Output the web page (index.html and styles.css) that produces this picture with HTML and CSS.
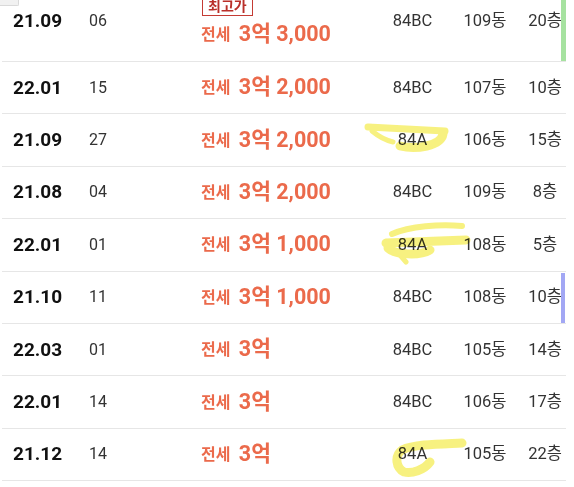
FILE: index.html
```html
<!DOCTYPE html>
<html lang="ko">
<head>
<meta charset="utf-8">
<link rel="stylesheet" href="styles.css">
</head>
<body>
<div class="page">
  <div class="tab-stub"></div>
  <div class="table">
    <div class="row first">
      <div class="c date">21.09</div>
      <div class="c day">06</div>
      <div class="c price">
        <span class="badge">최고가</span>
        <span class="amount"><span class="kind">전세</span> 3억 3,000</span>
      </div>
      <div class="c area">84BC</div>
      <div class="c dong">109동</div>
      <div class="c floor">20층</div>
      <span class="mark green"></span>
    </div>
    <div class="row">
      <div class="c date">22.01</div>
      <div class="c day">15</div>
      <div class="c price"><span class="amount"><span class="kind">전세</span> 3억 2,000</span></div>
      <div class="c area">84BC</div>
      <div class="c dong">107동</div>
      <div class="c floor">10층</div>
    </div>
    <div class="row">
      <div class="c date">21.09</div>
      <div class="c day">27</div>
      <div class="c price"><span class="amount"><span class="kind">전세</span> 3억 2,000</span></div>
      <div class="c area">84A</div>
      <div class="c dong">106동</div>
      <div class="c floor">15층</div>
    </div>
    <div class="row">
      <div class="c date">21.08</div>
      <div class="c day">04</div>
      <div class="c price"><span class="amount"><span class="kind">전세</span> 3억 2,000</span></div>
      <div class="c area">84BC</div>
      <div class="c dong">109동</div>
      <div class="c floor">8층</div>
    </div>
    <div class="row">
      <div class="c date">22.01</div>
      <div class="c day">01</div>
      <div class="c price"><span class="amount"><span class="kind">전세</span> 3억 1,000</span></div>
      <div class="c area">84A</div>
      <div class="c dong">108동</div>
      <div class="c floor">5층</div>
    </div>
    <div class="row">
      <div class="c date">21.10</div>
      <div class="c day">11</div>
      <div class="c price"><span class="amount"><span class="kind">전세</span> 3억 1,000</span></div>
      <div class="c area">84BC</div>
      <div class="c dong">108동</div>
      <div class="c floor">10층</div>
      <span class="mark blue"></span>
    </div>
    <div class="row">
      <div class="c date">22.03</div>
      <div class="c day">01</div>
      <div class="c price"><span class="amount"><span class="kind">전세</span> 3억</span></div>
      <div class="c area">84BC</div>
      <div class="c dong">105동</div>
      <div class="c floor">14층</div>
    </div>
    <div class="row">
      <div class="c date">22.01</div>
      <div class="c day">14</div>
      <div class="c price"><span class="amount"><span class="kind">전세</span> 3억</span></div>
      <div class="c area">84BC</div>
      <div class="c dong">106동</div>
      <div class="c floor">17층</div>
    </div>
    <div class="row">
      <div class="c date">21.12</div>
      <div class="c day">14</div>
      <div class="c price"><span class="amount"><span class="kind">전세</span> 3억</span></div>
      <div class="c area">84A</div>
      <div class="c dong">105동</div>
      <div class="c floor">22층</div>
    </div>
  </div>
  <svg class="marker" width="574" height="487" viewBox="0 0 574 487" aria-hidden="true">
    <g fill="none" stroke="#f6ef6a" stroke-linecap="round" stroke-linejoin="round">
      <path d="M368,127 L445,131" stroke-width="7"/>
      <path d="M443,134 C441,146 416,150 400,146" stroke-width="9"/>
      <path d="M372,131 C378,136 385,140 393,142" stroke-width="5"/>

      <path d="M392,234 C410,226 440,224 462,226" stroke-width="6"/>
      <path d="M386,243 L466,240" stroke-width="9"/>
      <path d="M388,248 C395,255 420,256 430,250" stroke-width="9"/>
      <path d="M400,255 L406,262" stroke-width="5"/>

      <path d="M462,443 C440,444 415,444 402,450 C394,456 396,468 404,472 C412,474 424,470 430,462" stroke-width="9"/>
    </g>
  </svg>
</div>
</body>
</html>
```

FILE: styles.css
```css
html, body {
  margin: 0;
  padding: 0;
  background: #ffffff;
}

.page {
  position: relative;
  width: 574px;
  height: 487px;
  overflow: hidden;
  font-family: Roboto, "Noto Sans CJK KR", "Noto Sans", sans-serif;
}

.tab-stub {
  position: absolute;
  top: 0;
  left: 0;
  width: 18px;
  height: 5px;
  background: #f1f1f1;
  border-right: 1px solid #d9d9d9;
  border-bottom: 1px solid #d9d9d9;
  border-bottom-right-radius: 2px;
}

.table {
  margin-left: 2px;
  width: 564px;
}

.row {
  position: relative;
  display: flex;
  align-items: center;
  height: 52.4px;
  box-sizing: border-box;
  border-bottom: 1px solid #e6e6e6;
}

.row.first {
  height: 62px;
  align-items: flex-start;
}

.c {
  line-height: 24px;
  white-space: nowrap;
}

.row.first .c {
  padding-top: 9px;
}

.date {
  width: 87px;
  padding-left: 11px;
  box-sizing: border-box;
  font-size: 19px;
  font-weight: 700;
  color: #111111;
}

.day {
  width: 112px;
  font-size: 16px;
  color: #333333;
}

.price {
  width: 178px;
  display: flex;
  flex-direction: column;
  align-items: flex-start;
  color: #eb6a4b;
  font-weight: 700;
}

.row.first .price {
  padding-top: 0;
  margin-top: -3px;
}

.badge {
  display: inline-block;
  box-sizing: border-box;
  height: 19px;
  padding: 0 5px;
  border: 1.5px solid #c43b34;
  font-size: 14px;
  line-height: 16px;
  color: #b9302a;
  font-weight: 700;
  margin-bottom: 6px;
  margin-left: 1px;
}

.amount {
  font-size: 21.5px;
  line-height: 24px;
}

.kind {
  font-size: 16px;
  margin-right: 3px;
  vertical-align: 1px;
}

.area {
  width: 67px;
  text-align: center;
  font-size: 16.5px;
  color: #333333;
}

.dong {
  width: 78px;
  text-align: center;
  font-size: 16.5px;
  color: #333333;
}

.floor {
  width: 42px;
  text-align: center;
  font-size: 16.5px;
  color: #333333;
}

.mark {
  position: absolute;
  right: 0;
  width: 5px;
}

.mark.green {
  top: 0;
  bottom: 0;
  background: #a6e2a0;
}

.mark.blue {
  top: 1px;
  bottom: 0;
  width: 4px;
  right: 1px;
  background: #a2a7f4;
}

.marker {
  position: absolute;
  top: 0;
  left: 0;
  mix-blend-mode: multiply;
  opacity: 0.85;
}
```
